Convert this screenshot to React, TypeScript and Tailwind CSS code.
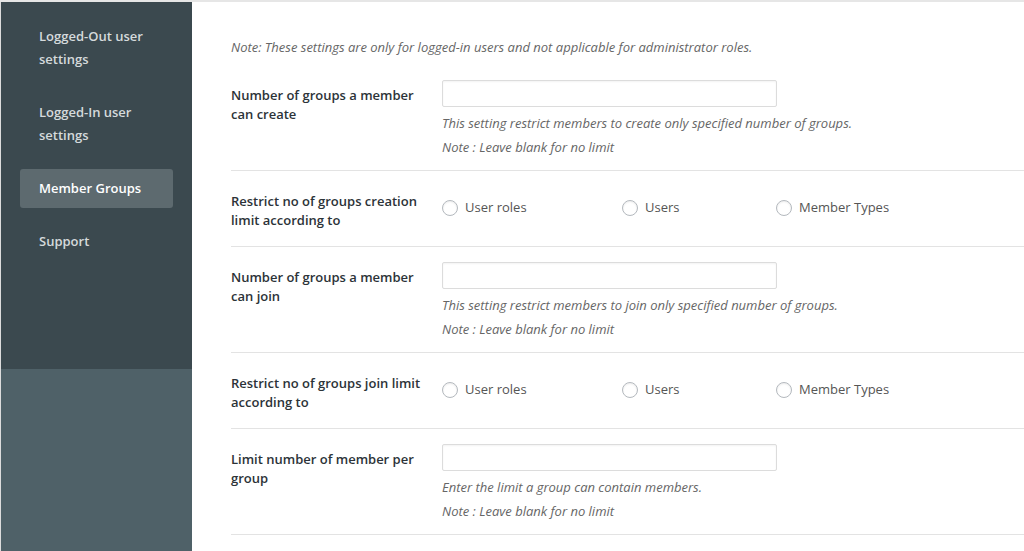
import { useState } from "react";

const navItems = [
  { id: "logged-out", label: "Logged-Out user settings" },
  { id: "logged-in", label: "Logged-In user settings" },
  { id: "member-groups", label: "Member Groups" },
  { id: "support", label: "Support" },
];

const font = { fontFamily: '"Open Sans", "Liberation Sans", sans-serif' };

function NumberRow({ label, help }: { label: string; help: string }) {
  return (
    <div className="flex border-b border-[#e3e3e3] pt-[15px] pb-[11px]">
      <div className="w-[211px] shrink-0 pr-[20px] pt-[6px] text-[13px] leading-[19px] font-semibold text-[#2c3338]">
        {label}
      </div>
      <div>
        <input
          type="text"
          className="block w-[335px] h-[27px] border border-[#dcdcdc] rounded-[2px] bg-white shadow-[inset_0_1px_2px_rgba(0,0,0,0.05)] outline-none px-2 text-[13px]"
        />
        <div className="mt-[4px] text-[13px] leading-6 italic text-[#666]">
          <p>{help}</p>
          <p>Note : Leave blank for no limit</p>
        </div>
      </div>
    </div>
  );
}

function RadioRow({ label, name }: { label: string; name: string }) {
  const [value, setValue] = useState("");
  const options = [
    { key: "roles", text: "User roles", width: "w-[180px]" },
    { key: "users", text: "Users", width: "w-[154px]" },
    { key: "types", text: "Member Types", width: "w-[160px]" },
  ];
  return (
    <div className="flex border-b border-[#e3e3e3] pt-[15px] pb-[16px]">
      <div className="w-[211px] shrink-0 pr-[20px] pt-[6px] text-[13px] leading-[19px] font-semibold text-[#2c3338]">
        {label}
      </div>
      <div className="flex items-center h-[28px] mt-[8px]">
        {options.map((o) => (
          <label
            key={o.key}
            className={`${o.width} flex items-center gap-[7px] cursor-pointer text-[13px] text-[#555]`}
          >
            <span
              onClick={() => setValue(o.key)}
              className="w-4 h-4 rounded-full border border-[#b4b9be] bg-white shadow-[inset_0_1px_2px_rgba(0,0,0,0.08)] flex items-center justify-center"
            >
              {value === o.key && (
                <span className="w-[6px] h-[6px] rounded-full bg-[#1e8cbe]" />
              )}
            </span>
            <input type="radio" name={name} className="hidden" />
            {o.text}
          </label>
        ))}
      </div>
    </div>
  );
}

export default function App() {
  const [active, setActive] = useState("member-groups");

  return (
    <div
      className="w-[1024px] h-[551px] overflow-hidden bg-white border-t-2 border-[#e6e6e6] flex"
      style={font}
    >
      <aside className="w-[192px] shrink-0 flex flex-col border-l border-[#dcdcdc]">
        <nav className="h-[367px] bg-[#3b494f] px-[19px] pt-[15px] flex flex-col gap-[14px]">
          {navItems.map((item) => (
            <button
              key={item.id}
              onClick={() => setActive(item.id)}
              className={`text-left px-[19px] py-[8px] rounded-[3px] text-[13px] leading-[23px] font-semibold ${
                active === item.id
                  ? "bg-[#5d6a6f] text-white"
                  : "text-[#d5dadc]"
              }`}
            >
              {item.label}
            </button>
          ))}
        </nav>
        <div className="flex-1 bg-[#4f6168]" />
      </aside>

      <main className="flex-1 pl-[39px] pt-[35px]">
        <p className="text-[13px] leading-5 italic text-[#666] mb-[8px]">
          Note: These settings are only for logged-in users and not applicable
          for administrator roles.
        </p>

        <NumberRow
          label="Number of groups a member can create"
          help="This setting restrict members to create only specified number of groups."
        />
        <RadioRow
          label="Restrict no of groups creation limit according to"
          name="create_limit_by"
        />
        <NumberRow
          label="Number of groups a member can join"
          help="This setting restrict members to join only specified number of groups."
        />
        <RadioRow
          label="Restrict no of groups join limit according to"
          name="join_limit_by"
        />
        <NumberRow
          label="Limit number of member per group"
          help="Enter the limit a group can contain members."
        />
      </main>
    </div>
  );
}
